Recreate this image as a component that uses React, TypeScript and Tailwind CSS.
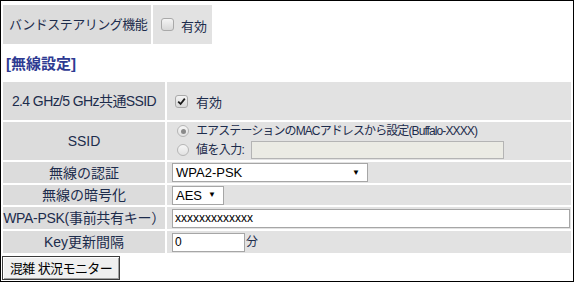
import React from 'react';

const font = 'font-["Liberation_Sans","Noto_Sans_CJK_JP",sans-serif]';

function Box({ checked }: { checked?: boolean }) {
  return (
    <span className="relative inline-flex h-[13px] w-[13px] shrink-0 items-center justify-center rounded-[3px] border border-[#a9a9a9] bg-gradient-to-b from-[#f4f4f4] to-[#d8d8d8]">
      {checked && (
        <svg width="9" height="9" viewBox="0 0 9 9">
          <path d="M1.2 4.6 L3.6 7 L7.8 1.6" fill="none" stroke="#1a1a1a" strokeWidth="1.8" />
        </svg>
      )}
    </span>
  );
}

function Radio({ checked }: { checked?: boolean }) {
  return (
    <span className="inline-flex h-[12px] w-[12px] shrink-0 items-center justify-center rounded-full border border-[#b5b5b5] bg-gradient-to-b from-[#f6f6f6] to-[#e2e2e2]">
      {checked && <span className="h-[5px] w-[5px] rounded-full bg-[#8a8a8a]" />}
    </span>
  );
}

function Select({ value, width }: { value: string; width: string }) {
  return (
    <div
      className={`flex h-[19px] items-center justify-between border border-[#a6a6a6] bg-white pl-[3px] pr-[7px] text-[13px] leading-none text-black ${width}`}
    >
      <span>{value}</span>
      <span className="text-[8px] leading-none">▼</span>
    </div>
  );
}

export default function App() {
  const label = 'bg-[#dcdcdc] p-0 text-center text-[14px] leading-none whitespace-nowrap text-[#1d2c4c]';
  const val = 'bg-[#e2e2e2] p-0 pl-[5px] text-[13px] leading-none text-[#1d2c4c]';

  return (
    <div className={`h-[282px] w-[574px] overflow-hidden border border-black bg-white ${font}`}>
      <table className="mt-[2px] border-separate border-spacing-[2px]">
        <tbody>
          <tr className="h-[39px]">
            <td className="w-[148px] whitespace-nowrap bg-[#dcdcdc] p-0 pl-[6px] text-[13px] leading-none text-[#1d2c4c]">
              <span className="tracking-[-0.5px]">バンドステアリング機能</span>
            </td>
            <td className="w-[59px] bg-[#e2e2e2] p-0 pl-[8px] text-[13px] leading-none text-[#1d2c4c]">
              <div className="flex items-center gap-[7px]">
                <Box />
                <span className="mt-[4px]">有効</span>
              </div>
            </td>
          </tr>
        </tbody>
      </table>

      <div className="flex h-[34px] items-center pl-[5px] text-[15px] font-bold leading-none text-[#2e3a92]">
        [無線設定]
      </div>

      <table className="w-[572px] border-separate border-spacing-[2px]">
        <tbody>
          <tr className="h-[38px]">
            <td className={`${label} w-[162px]`}>
              <span className="tracking-[-0.6px]">2.4 GHz/5 GHz共通SSID</span>
            </td>
            <td className={val}>
              <div className="flex items-center gap-[8px] pl-[3px]">
                <Box checked />
                <span className="mt-[2px]">有効</span>
              </div>
            </td>
          </tr>
          <tr className="h-[38px]">
            <td className={label}>SSID</td>
            <td className={val}>
              <div className="flex flex-col gap-[2px] pl-[5px]">
                <div className="flex h-[16px] items-center gap-[7px]">
                  <Radio checked />
                  <span className="text-[12px] tracking-[-0.9px]">
                    エアステーションのMACアドレスから設定(Buffalo-XXXX)
                  </span>
                </div>
                <div className="flex h-[18px] items-center gap-[7px]">
                  <Radio />
                  <span className="text-[12px] tracking-[-0.6px]">値を入力:</span>
                  <div className="h-[18px] w-[253px] border border-[#b4b4b4] bg-[#ebebe4]" />
                </div>
              </div>
            </td>
          </tr>
          <tr className="h-[21px]">
            <td className={label}>無線の認証</td>
            <td className={val}>
              <Select value="WPA2-PSK" width="w-[196px]" />
            </td>
          </tr>
          <tr className="h-[20px]">
            <td className={label}>無線の暗号化</td>
            <td className={val}>
              <Select value="AES" width="w-[52px]" />
            </td>
          </tr>
          <tr className="h-[22px]">
            <td className={`${label} text-[13px]`}>
              <span className="tracking-[-0.3px]">WPA-PSK(事前共有キー）</span>
            </td>
            <td className={val}>
              <div className="flex h-[19px] w-[398px] items-center border border-[#a6a6a6] bg-white pl-[2px] text-[12px] text-black">
                xxxxxxxxxxxxx
              </div>
            </td>
          </tr>
          <tr className="h-[22px]">
            <td className={label}>Key更新間隔</td>
            <td className={val}>
              <div className="flex items-center gap-[1px]">
                <div className="flex h-[19px] w-[73px] items-center border border-[#a6a6a6] bg-white pl-[2px] text-[12px] text-black">
                  0
                </div>
                <span className="text-[12px]">分</span>
              </div>
            </td>
          </tr>
        </tbody>
      </table>

      <button className="ml-[1px] mt-[1px] flex h-[24px] w-[118px] items-center justify-center border border-[#3c3c3c] bg-[#efefef] text-[13px] leading-none tracking-[-0.6px] text-black shadow-[inset_1px_1px_0_#fff,inset_-1px_-1px_0_#a0a0a0]">
        混雑 状況モニター
      </button>
    </div>
  );
}
